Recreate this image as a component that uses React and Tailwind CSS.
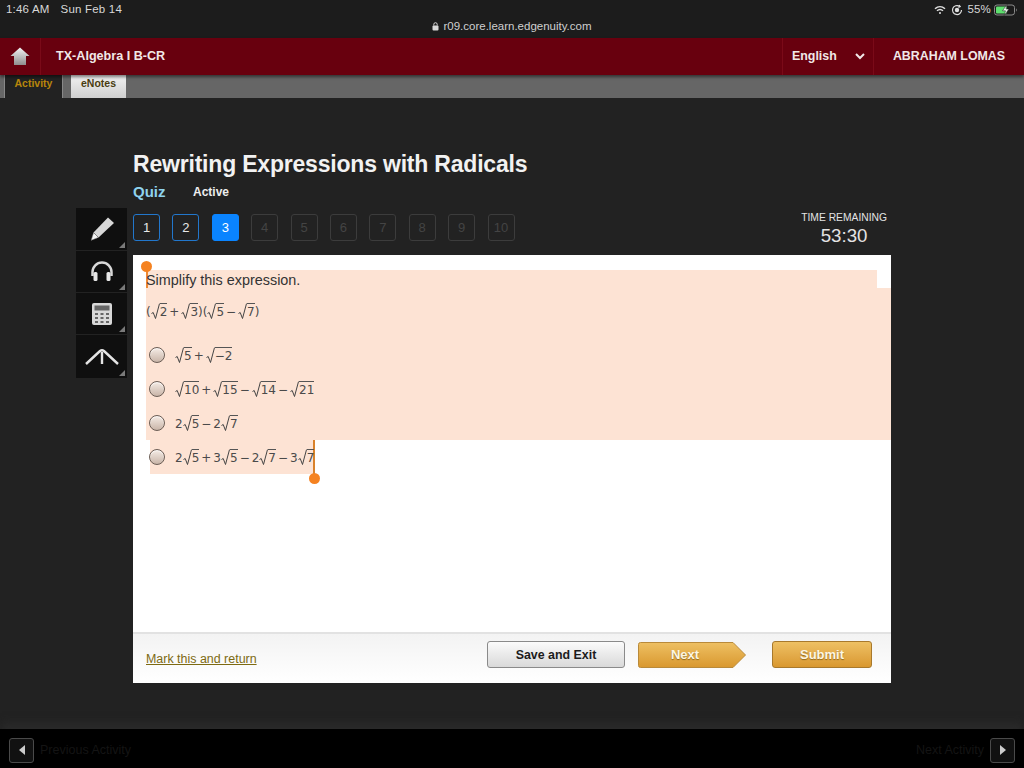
import React from "react";

const Sqrt = ({ children }) => (
  <span className="inline-flex items-start h-[17px]">
    <svg width="9" height="17" viewBox="0 0 9 17" className="block">
      <path d="M0.5 10.5 L2.2 9.5 L4.5 15.5 L8.5 0.6" fill="none" stroke="#444" strokeWidth="1" />
    </svg>
    <span className="border-t border-[#555] leading-[15px] h-[16px] pt-px">{children}</span>
  </span>
);

const Op = ({ children }) => <span className="mx-[2px] leading-[16px] pt-px">{children}</span>;

const Tx = ({ children }) => <span className="leading-[16px] pt-px">{children}</span>;

const Math = ({ children }) => (
  <span className="inline-flex items-end text-[12px] text-[#4a4a4a] font-['DejaVu_Sans',sans-serif]">{children}</span>
);

const Radio = () => (
  <span className="block w-[16px] h-[16px] rounded-full border border-[#6b5d55] bg-gradient-to-b from-[#f5ece6] to-[#c9b5a8] shadow-[inset_0_1px_1px_rgba(255,255,255,0.8)]" />
);

const Option = ({ children }) => (
  <div className="h-[34px] flex items-center gap-[10px] pl-[3px]">
    <Radio />
    <Math>{children}</Math>
  </div>
);

const NavBtn = ({ n, state }) => {
  const cls =
    state === "active"
      ? "bg-[#0a84ff] border-[#0a84ff] text-white"
      : state === "done"
      ? "bg-[#222] border-[#2277cc] text-[#e8e8e8]"
      : "bg-[#222] border-[#3c3c3c] text-[#444]";
  return (
    <div className={`w-[27px] h-[27px] rounded-[3px] border flex items-center justify-center text-[13px] ${cls}`}>{n}</div>
  );
};

const Tool = ({ children, h }) => (
  <div className={`relative bg-[#0f0f0f] flex items-center justify-center ${h}`}>
    {children}
    <span className="absolute right-[2px] bottom-[2px] w-0 h-0 border-l-[6px] border-l-transparent border-b-[6px] border-b-[#7a7a7a]" />
  </div>
);

export default function App() {
  return (
    <div className="w-[1024px] h-[768px] flex flex-col overflow-hidden bg-[#222222] font-['Liberation_Sans',sans-serif]">
      {/* iOS status bar */}
      <div className="h-[38px] bg-[#1c1c1c] text-[#d8d8d8] flex flex-col">
        <div className="h-[18px] pt-[1px] flex items-center justify-between pl-[6px] pr-[6px] text-[11.5px]">
          <div className="flex gap-[11px] tracking-[0.2px]">
            <span>1:46 AM</span>
            <span>Sun Feb 14</span>
          </div>
          <div className="flex items-center gap-[4px]">
            <svg width="12" height="10" viewBox="0 0 12 10" fill="none" stroke="#e0e0e0" strokeWidth="1.5">
              <path d="M1 3.8 C4 1 8 1 11 3.8" />
              <path d="M3 5.8 C5 4 7 4 9 5.8" />
              <circle cx="6" cy="8" r="1" fill="#e0e0e0" stroke="none" />
            </svg>
            <svg width="12" height="12" viewBox="0 0 12 12" fill="none" stroke="#e0e0e0" strokeWidth="1.2" className="ml-[1px]">
              <path d="M10.5 6 A4.5 4.5 0 1 1 8.5 2.3" />
              <path d="M8 1 L9.2 2.6 L7.4 3.4" />
              <circle cx="6" cy="6" r="2.2" fill="#e0e0e0" stroke="none" />
            </svg>
            <span className="tracking-[0.2px]">55%</span>
            <svg width="24" height="12" viewBox="0 0 24 12" className="ml-[-1px]">
              <rect x="0.5" y="1" width="20" height="10" rx="2.5" fill="none" stroke="#8a8a8a" />
              <rect x="2" y="2.5" width="11" height="7" rx="1" fill="#5fe06f" />
              <path d="M22 4.5 C23 5 23 7 22 7.5 Z" fill="#8a8a8a" />
              <path d="M13 0.5 L8.5 6.8 L11.5 6.8 L10.2 11.5 L15 5 L12 5 Z" fill="#f2f2f2" stroke="#1c1c1c" strokeWidth="0.5" />
            </svg>
          </div>
        </div>
        <div className="flex-1 flex items-center justify-center gap-[4px] text-[11.5px] text-[#cfcfcf] pb-[6px]">
          <svg width="7" height="9" viewBox="0 0 7 9">
            <rect x="0.5" y="3.5" width="6" height="5" rx="1" fill="#d8d8d8" />
            <path d="M1.8 3.5 V2.4 A1.7 1.7 0 0 1 5.2 2.4 V3.5" fill="none" stroke="#d8d8d8" />
          </svg>
          <span>r09.core.learn.edgenuity.com</span>
        </div>
      </div>

      {/* Red header */}
      <div className="h-[37px] bg-[#68000e] flex items-stretch text-[#f1e8e8] font-bold text-[12.4px] shadow-[0_2px_3px_rgba(0,0,0,0.5)] z-10">
        <div className="w-[41px] flex items-center justify-center border-r border-[#7a0a18]">
          <svg width="20" height="19" viewBox="0 0 20 19">
            <defs>
              <linearGradient id="hm" x1="0" y1="0" x2="0" y2="1">
                <stop offset="0" stopColor="#f4f4f4" />
                <stop offset="1" stopColor="#8e8e8e" />
              </linearGradient>
            </defs>
            <path d="M10 0.5 L19.5 9 L16 9 L16 18 L4 18 L4 9 L0.5 9 Z" fill="url(#hm)" />
          </svg>
        </div>
        <div className="flex-1 flex items-center pl-[15px] text-[12.6px]">TX-Algebra I B-CR</div>
        <div className="w-[92px] flex items-center justify-between pl-[9px] pr-[8px] border-l border-r border-[#7a0a18]">
          <span>English</span>
          <svg width="10" height="7" viewBox="0 0 10 7" fill="none" stroke="#f1e8e8" strokeWidth="2">
            <path d="M1 1 L5 5 L9 1" />
          </svg>
        </div>
        <div className="w-[150px] flex items-center justify-center">ABRAHAM LOMAS</div>
      </div>

      {/* Tabs */}
      <div className="h-[23px] bg-[#666666] flex items-stretch pl-[4px] text-[10.5px] font-bold">
        <div className="w-[59px] bg-[#222222] border-l border-r border-[#888] text-[#b8860b] flex justify-center pt-px">Activity</div>
        <div className="w-[55px] ml-[8px] bg-gradient-to-b from-[#f2f2f2] to-[#cfcfcf] text-[#4a3c10] flex justify-center pt-px">eNotes</div>
      </div>

      {/* Main */}
      <div className="flex-1 flex flex-col pl-[133px] pr-[133px]">
        <h1 className="mt-[52px] text-[23px] leading-[28px] font-bold text-[#f2f2f2] tracking-[-0.2px]">Rewriting Expressions with Radicals</h1>
        <div className="mt-[4px] h-[20px] flex items-center">
          <span className="text-[15px] font-bold text-[#8fd3ee] w-[60px]">Quiz</span>
          <span className="text-[12px] font-bold text-[#eeeeee]">Active</span>
        </div>

        <div className="relative mt-[10px] h-[43px] flex pt-[2px] gap-[12.4px]">
          <NavBtn n={1} state="done" />
          <NavBtn n={2} state="done" />
          <NavBtn n={3} state="active" />
          {[4, 5, 6, 7, 8, 9, 10].map((n) => (
            <NavBtn key={n} n={n} />
          ))}
          <div className="ml-auto mr-[4px] flex flex-col items-center text-[#e4e4e4] -mt-[3px]">
            <span className="text-[10.3px] leading-[13px]">TIME REMAINING</span>
            <span className="text-[18.7px] leading-[23px]">53:30</span>
          </div>
          {/* floating tool palette */}
          <div className="absolute left-[-57px] top-[-4px] w-[51px] flex flex-col gap-px">
            <Tool h="h-[42px]">
              <svg width="26" height="26" viewBox="0 0 26 26">
                <path d="M19 1.5 L25 7 L9.5 21.5 L2 24.5 L4.5 16.5 Z" fill="#d8d8d8" />
                <path d="M4.5 16.5 L9.5 21.5 L2 24.5 Z" fill="#f4f4f4" stroke="#222" strokeWidth="0.5" />
              </svg>
            </Tool>
            <Tool h="h-[41px]">
              <svg width="26" height="24" viewBox="0 0 26 24">
                <path d="M3.5 16 V12 A9.5 9.5 0 0 1 22.5 12 V16" fill="none" stroke="#d8d8d8" strokeWidth="2.5" />
                <rect x="4.5" y="12" width="4" height="9" rx="1.5" fill="#e8e8e8" />
                <rect x="17.5" y="12" width="4" height="9" rx="1.5" fill="#e8e8e8" />
              </svg>
            </Tool>
            <Tool h="h-[41px]">
              <svg width="22" height="24" viewBox="0 0 22 24">
                <rect x="1" y="1" width="20" height="22" rx="2" fill="#d8d8d8" />
                <rect x="3.5" y="3.5" width="15" height="5" fill="#666" />
                <path d="M4 11h3v2h-3zM9.5 11h3v2h-3zM15 11h3v2h-3zM4 15h3v2h-3zM9.5 15h3v2h-3zM15 15h3v2h-3zM4 19h3v2h-3zM9.5 19h3v2h-3zM15 19h3v2h-3z" fill="#666" />
              </svg>
            </Tool>
            <Tool h="h-[43px]">
              <svg width="34" height="20" viewBox="0 0 34 20" fill="none" stroke="#e4e4e4" strokeWidth="2.4">
                <path d="M1 17 L15 4 Q17 2.5 19 4 L33 17" />
                <path d="M17 5 V17" />
              </svg>
            </Tool>
          </div>
        </div>

        {/* Card */}
        <div className="relative h-[428px] bg-white flex flex-col">
          {/* selection highlight */}
          <div className="absolute left-[13px] top-[15px] w-[731px] h-[18px] bg-[#fde3d4]" />
          <div className="absolute left-[13px] top-[33px] w-[745px] h-[152px] bg-[#fde3d4]" />
          <div className="absolute left-[17px] top-[185px] w-[164px] h-[34px] bg-[#fde3d4]" />
          <div className="absolute left-[13px] top-[11px] w-[2px] h-[22px] bg-[#ee8a33]" />
          <div className="absolute left-[8px] top-[6px] w-[11px] h-[11px] rounded-full bg-[#f58220]" />
          <div className="absolute left-[180px] top-[185px] w-[2px] h-[38px] bg-[#d9822b]" />
          <div className="absolute left-[176px] top-[218px] w-[11px] h-[11px] rounded-full bg-[#f58220]" />

          <div className="relative flex-1 pl-[13px] pt-[16px]">
            <p className="text-[14.4px] leading-[18px] text-[#333]">Simplify this expression.</p>
            <div className="mt-[12px] h-[20px] flex items-center">
              <Math>
                <Tx>(</Tx><Sqrt>2</Sqrt><Op>+</Op><Sqrt>3</Sqrt><Tx>)(</Tx><Sqrt>5</Sqrt><Op>−</Op><Sqrt>7</Sqrt><Tx>)</Tx>
              </Math>
            </div>
            <div className="mt-[17px] flex flex-col">
              <Option><Sqrt>5</Sqrt><Op>+</Op><Sqrt>−2</Sqrt></Option>
              <Option><Sqrt>10</Sqrt><Op>+</Op><Sqrt>15</Sqrt><Op>−</Op><Sqrt>14</Sqrt><Op>−</Op><Sqrt>21</Sqrt></Option>
              <Option><Tx>2</Tx><Sqrt>5</Sqrt><Op>−</Op><Tx>2</Tx><Sqrt>7</Sqrt></Option>
              <Option><Tx>2</Tx><Sqrt>5</Sqrt><Op>+</Op><Tx>3</Tx><Sqrt>5</Sqrt><Op>−</Op><Tx>2</Tx><Sqrt>7</Sqrt><Op>−</Op><Tx>3</Tx><Sqrt>7</Sqrt></Option>
            </div>
          </div>

          {/* Card footer */}
          <div className="h-[51px] border-t-2 border-[#e2e2e2] bg-gradient-to-b from-[#f3f3f3] to-white flex items-center pl-[13px] pr-[19px]">
            <a className="mt-[2px] text-[12.45px] text-[#7d6a12] underline">Mark this and return</a>
            <div className="ml-auto flex items-center mb-[8px]">
              <button className="w-[138px] h-[27px] pt-[2px] rounded-[3px] border border-[#8a8a8a] bg-gradient-to-b from-[#fbfbfb] to-[#d9d9d9] text-[12.4px] font-bold text-[#1c1c1c]">Save and Exit</button>
              <div className="relative ml-[13px] w-[108px] h-[26px] pt-[1px] flex items-center justify-center pr-[14px]">
                <svg width="108" height="26" viewBox="0 0 108 26" className="absolute inset-0">
                  <defs>
                    <linearGradient id="nx" x1="0" y1="0" x2="0" y2="1">
                      <stop offset="0" stopColor="#eec063" />
                      <stop offset="1" stopColor="#d9982f" />
                    </linearGradient>
                  </defs>
                  <path d="M2.5 0.5 H95 L107.5 13 L95 25.5 H2.5 Q0.5 25.5 0.5 23.5 V2.5 Q0.5 0.5 2.5 0.5 Z" fill="url(#nx)" stroke="#b98a3a" />
                </svg>
                <span className="relative text-[13px] font-bold text-[#fdf6e3] [text-shadow:0_1px_1px_rgba(90,60,0,0.6)]">Next</span>
              </div>
              <button className="ml-[26px] w-[100px] h-[27px] pt-[1px] rounded-[3px] border border-[#a8792c] bg-gradient-to-b from-[#eec063] to-[#d9982f] text-[13px] font-bold text-[#fdf6e3] [text-shadow:0_1px_1px_rgba(90,60,0,0.6)]">Submit</button>
            </div>
          </div>
        </div>
      </div>

      {/* Bottom bar */}
      <div className="h-[39px] bg-black shadow-[0_-8px_8px_-2px_#2a2a2a] flex items-center justify-between pl-[9px] pr-[9px] pt-[3px] text-[12.5px] text-[#141414]">
        <div className="flex items-center gap-[6px]">
          <div className="w-[25px] h-[25px] rounded-[3px] border border-[#4a4a4a] bg-[#111] flex items-center justify-center">
            <span className="w-0 h-0 border-y-[5px] border-y-transparent border-r-[6px] border-r-[#cccccc]" />
          </div>
          <span>Previous Activity</span>
        </div>
        <div className="flex items-center gap-[6px]">
          <span>Next Activity</span>
          <div className="w-[25px] h-[25px] rounded-[3px] border border-[#4a4a4a] bg-[#111] flex items-center justify-center">
            <span className="w-0 h-0 border-y-[5px] border-y-transparent border-l-[6px] border-l-[#cccccc]" />
          </div>
        </div>
      </div>
    </div>
  );
}
